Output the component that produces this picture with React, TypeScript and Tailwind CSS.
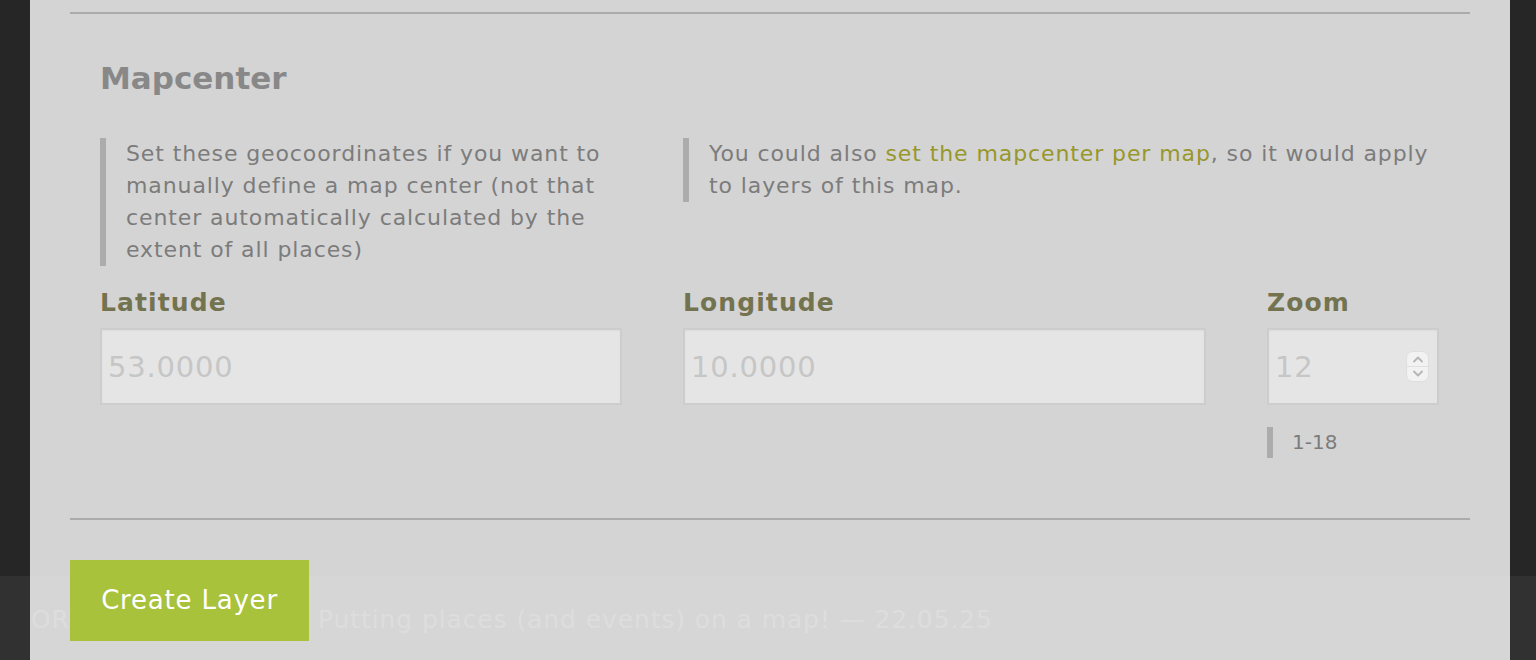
import React from "react";

const font = { fontFamily: '"DejaVu Sans", "Open Sans", sans-serif' };

function Spin() {
  return (
    <div className="absolute right-[10px] top-[23px] w-[23px] h-[31px] rounded-[7px] bg-[#f2f2f2] border border-[#dedede] flex flex-col overflow-hidden">
      <div className="flex-1 flex items-center justify-center border-b border-[#e0e0e0]">
        <svg width="12" height="8" viewBox="0 0 12 8">
          <path d="M2 6.5 L6 2.5 L10 6.5" fill="none" stroke="#b5b5b5" strokeWidth="1.8" strokeLinecap="round" strokeLinejoin="round" />
        </svg>
      </div>
      <div className="flex-1 flex items-center justify-center">
        <svg width="12" height="8" viewBox="0 0 12 8">
          <path d="M2 1.5 L6 5.5 L10 1.5" fill="none" stroke="#b5b5b5" strokeWidth="1.8" strokeLinecap="round" strokeLinejoin="round" />
        </svg>
      </div>
    </div>
  );
}

function Field({ label, value, spin }: { label: string; value: string; spin?: boolean }) {
  return (
    <div className="flex flex-col">
      <label className="text-[25px] leading-[30px] font-bold tracking-[1.1px] text-[#737350] mb-[10px]">{label}</label>
      <div className="relative">
        <input
          readOnly
          placeholder={value}
          className="w-full h-[77px] bg-[#e5e5e5] border-2 border-[#cdcdcd] px-[6px] text-[29px] tracking-[0.8px] placeholder:text-[#c6c6c6] outline-none shadow-[inset_0_1px_2px_rgba(0,0,0,0.04)]"
          style={font}
        />
        {spin && <Spin />}
      </div>
    </div>
  );
}

export default function App() {
  return (
    <div className="relative h-[660px] w-full overflow-hidden bg-[#262626]" style={font}>
      <div className="ml-[30px] mr-[26px] h-full bg-[#d4d4d4] px-[40px] pt-[12px]">
        <div className="h-[2px] bg-[#ababab]" />
        <div className="px-[30px]">
          <h2 className="mt-[44px] text-[31px] leading-[40px] font-bold text-[#888888]">Mapcenter</h2>
          <div className="mt-[40px] grid grid-cols-[522px_1fr] gap-x-[61px]">
            <blockquote className="border-l-[6px] border-[#acacac] pl-[20px] text-[22px] leading-[32px] text-[#7c7c7c] tracking-[0.9px]">
              Set these geocoordinates if you want to manually define a map center (not that center automatically calculated by the extent of all places)
            </blockquote>
            <div>
              <blockquote className="border-l-[6px] border-[#acacac] pl-[20px] text-[22px] leading-[32px] text-[#7c7c7c] tracking-[0.9px]">
                You could also <a className="text-[#97972c]">set the mapcenter per map</a>, so it would apply to layers of this map.
              </blockquote>
            </div>
          </div>
          <div className="mt-[22px] grid grid-cols-[522px_523px_172px] gap-x-[61px]">
            <Field label="Latitude" value="53.0000" />
            <Field label="Longitude" value="10.0000" />
            <div className="flex flex-col">
              <Field label="Zoom" value="12" spin />
              <div className="mt-[22px] border-l-[6px] border-[#acacac] pl-[19px] text-[20px] leading-[31px] text-[#7c7c7c]">1-18</div>
            </div>
          </div>
        </div>
        <div className="mt-[60px] h-[2px] bg-[#ababab]" />
        <button className="relative z-10 mt-[40px] h-[81px] w-[239px] bg-[#a8c23c] text-white text-[26px] tracking-[0.8px]">
          Create Layer
        </button>
      </div>
      <div className="absolute left-0 right-0 bottom-0 h-[84px] bg-white/[0.05] flex items-center pt-[4px] pl-[31px] text-[25px] tracking-[0.9px] text-white/[0.2]">
        <span className="w-[287px]">OR</span>
        <span>Putting places (and events) on a map! — 22.05.25</span>
      </div>
    </div>
  );
}
